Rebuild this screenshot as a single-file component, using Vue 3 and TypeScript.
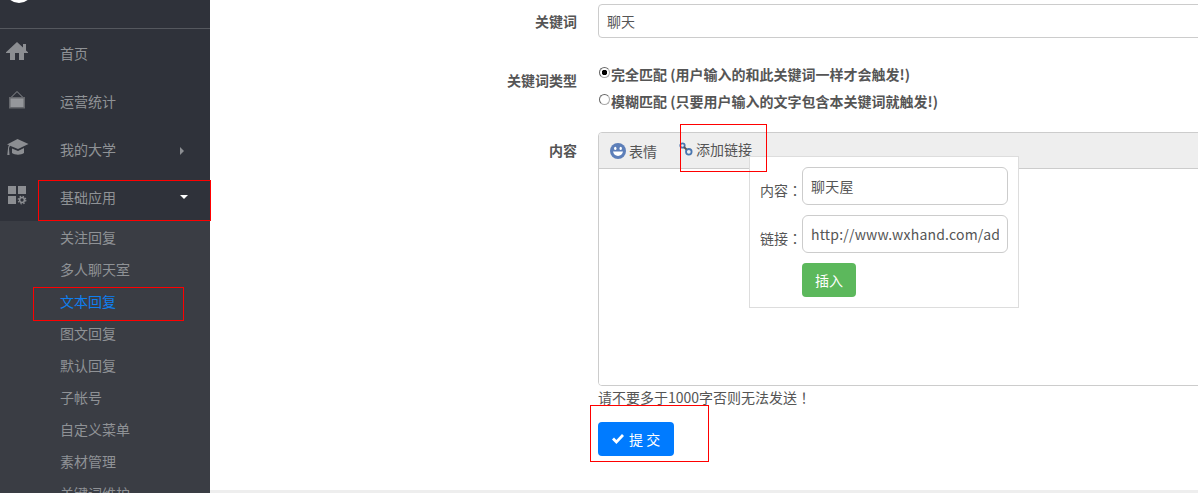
<script setup lang="ts">
const subItems: string[] = ['关注回复', '多人聊天室', '文本回复', '图文回复', '默认回复', '子帐号', '自定义菜单', '素材管理', '关键词维护']
</script>

<template>
  <div class="page">
    <aside class="side">
      <div class="brand"><span class="logo"></span></div>
      <nav class="nav">
        <div class="item">
          <svg class="ico" viewBox="0 0 24 24"><path d="M12 1l6 5.500V3h3v6.500l2 1.700V12h-4v7h-5v-7h-4v7H5v-7H1v-.8z" /></svg>
          <span>首页</span>
        </div>
        <div class="item">
          <svg class="ico" viewBox="0 0 24 24"><path d="M6 8.500 12 2.500l6 6" fill="none" stroke="#8c8e92" stroke-width="1" /><path d="M4 8h16v11.500H4z" fill="#66686d" /><path d="M5.500 9.500h13V18h-13z" fill="#95979b" /></svg>
          <span>运营统计</span>
        </div>
        <div class="item">
          <svg class="ico" viewBox="0 0 24 24"><path d="M12.500 2 23.500 7l-10.500 5-8-3.300c-.6 1-.9 1.800-1 2.800l.5 6.500H2.300l.7-6.500c0-1.300.4-2.300 1-3.400L2 7.500z" /><path d="M7 11.500l6 2.500 6-3v5c-3 2.300-9 2.300-12 0z" /></svg>
          <span>我的大学</span>
          <i class="arrow-right"></i>
        </div>
        <div class="item">
          <svg class="ico" viewBox="0 0 24 24"><path d="M3 1h8v8H3zM13 1h8v8h-8zM3 11h8v8H3z" /><circle cx="17" cy="15" r="2.400" fill="none" stroke="#8c8e92" stroke-width="1.500" /><circle cx="17" cy="15" r="3.800" fill="none" stroke="#8c8e92" stroke-width="1.200" stroke-dasharray="1.500 1.500" /></svg>
          <span>基础应用</span>
          <i class="arrow-down"></i>
        </div>
      </nav>
      <ul class="sub">
        <li v-for="(s, i) in subItems" :key="s" :class="{ active: i === 2 }">{{ s }}</li>
      </ul>
    </aside>

    <main class="main">
      <form class="form" @submit.prevent>
        <div class="row row-kw">
          <label class="lbl">关键词</label>
          <input class="ctl" type="text" value="聊天" />
        </div>
        <div class="row row-type">
          <label class="lbl lbl-type">关键词类型</label>
          <div class="radios">
            <label class="radio"><input type="radio" name="t" checked /><b>完全匹配 (用户输入的和此关键词一样才会触发!)</b></label>
            <label class="radio"><input type="radio" name="t" /><b>模糊匹配 (只要用户输入的文字包含本关键词就触发!)</b></label>
          </div>
        </div>
        <div class="row row-content">
          <label class="lbl lbl-content">内容</label>
          <div class="content">
            <div class="editor">
              <div class="toolbar">
                <span class="tool tool-emoji">
                  <svg width="16" height="16" viewBox="0 0 16 16"><circle cx="8" cy="8" r="8" fill="#5d7fb9" /><ellipse cx="5.300" cy="5.400" rx="1.200" ry="1.700" fill="#fff" /><ellipse cx="10.700" cy="5.400" rx="1.200" ry="1.700" fill="#fff" /><path d="M3 8.500h10c-.4 2.700-2.500 4.400-5 4.400S3.400 11.200 3 8.500z" fill="#fff" /></svg>
                  表情
                </span>
                <span class="tool tool-link">
                  <svg width="14" height="14" viewBox="0 0 14 14" fill="none" stroke="#4a76b0" stroke-width="1.800"><circle cx="3.500" cy="3.500" r="2.200" /><circle cx="9.800" cy="9.800" r="2.800" /><path d="M5 5l2.500 2.500" stroke="#555" /></svg>
                  添加链接
                </span>
              </div>
              <div class="area"></div>
              <div class="popup">
                <div class="p-row"><span class="p-lbl">内容<span class="fw">：</span></span><input class="p-input" type="text" value="聊天屋" /></div>
                <div class="p-row"><span class="p-lbl">链接<span class="fw">：</span></span><input class="p-input" type="text" value="http://www.wxhand.com/addon/Chat" /></div>
                <button class="insert" type="button">插入</button>
              </div>
            </div>
            <p class="hint">请不要多于1000字否则无法发送<span class="fw">！</span></p>
            <button class="submit" type="submit">
              <svg width="14" height="12" viewBox="0 0 14 12"><path d="M1 6.500 3 4.500 5.400 7 11 1l2 2-7.600 8z" fill="#fff" /></svg>
              <span>提 交</span>
            </button>
          </div>
        </div>
      </form>
      <div class="foot"></div>
    </main>

    <div class="mark m1"></div>
    <div class="mark m2"></div>
    <div class="mark m3"></div>
    <div class="mark m4"></div>
  </div>
</template>

<style>
html, body { margin: 0; padding: 0; overflow: hidden; background: #fff; }
</style>

<style scoped>
* { box-sizing: border-box; }
.page {
  position: relative;
  display: flex;
  width: 1198px;
  height: 493px;
  overflow: hidden;
  font-family: "Noto Sans CJK SC", "Liberation Sans", sans-serif;
  font-size: 14px;
  color: #555;
}
.fw { font-family: "Noto Sans CJK TC", sans-serif; }
.side { width: 210px; flex: none; height: 493px; overflow: hidden; background: #2f323a; color: #8f9296; }
.brand { height: 29px; border-bottom: 1px solid #55585e; overflow: hidden; }
.logo { display: block; width: 28px; height: 28px; margin: -25px 0 0 5px; background: #fff; border-radius: 50%; }
.nav { display: flex; flex-direction: column; }
.item { position: relative; display: flex; align-items: center; height: 48px; padding-left: 60px; }
.ico { position: absolute; left: 5px; top: 12px; width: 24px; height: 24px; fill: #8c8e92; }
.arrow-right { position: absolute; left: 180px; top: 22px; border: 4px solid transparent; border-left: 4px solid #8c8e92; border-right: 0; }
.arrow-down { position: absolute; left: 180px; top: 22px; border: 4px solid transparent; border-top: 4px solid #fff; border-bottom: 0; }
.sub { list-style: none; margin: 0; padding: 0 0 0 60px; background: #3a3d44; }
.sub li { display: flex; align-items: center; height: 32px; }
.sub li.active { color: #0f7ff0; }
.main { position: relative; flex: 1; min-width: 0; display: flex; flex-direction: column; overflow: hidden; }
.form { flex: 1; padding: 4px 0 0 277px; }
.row { display: flex; }
.lbl { flex: none; width: 90px; margin-right: 21px; text-align: right; font-weight: 700; }
.row-kw .lbl { line-height: 34px; }
.ctl {
  flex: none;
  width: 640px;
  height: 34px;
  padding: 0 8px;
  border: 1px solid #ccc;
  border-radius: 4px;
  font: inherit;
  color: #555;
  outline: none;
}
.row-type { margin-top: 19px; height: 75px; }
.lbl-type { padding-top: 14px; line-height: 18px; }
.radios { padding-top: 3px; }
.radio { display: flex; align-items: center; height: 27px; white-space: nowrap; }
.radio b { font-weight: 700; }
.radio input {
  appearance: none;
  width: 11px;
  height: 11px;
  margin: 0 1px 3px 1px;
  border: 1px solid #aaa;
  border-top-color: #666;
  border-left-color: #666;
  border-radius: 50%;
  background: #fff;
}
.radio input:checked { background: radial-gradient(circle, #000 2.500px, #fff 3px); }
.lbl-content { padding-top: 9px; line-height: 18px; }
.content { flex: none; width: 640px; }
.editor { position: relative; display: flex; flex-direction: column; height: 254px; border: 1px solid #ccc; border-radius: 4px 0 0 4px; overflow: hidden; }
.toolbar { flex: none; height: 36px; background: #eee; border-bottom: 1px solid #ccc; position: relative; }
.tool { display: flex; align-items: center; gap: 3px; position: absolute; line-height: 20px; }
.tool-emoji { left: 11px; top: 8px; }
.tool-link { left: 80px; top: 6px; }
.area { flex: 1; background: #fff; }
.popup {
  position: absolute;
  left: 150px;
  top: 23px;
  width: 270px;
  height: 152px;
  padding: 10px;
  background: #fff;
  border: 1px solid #ddd;
}
.p-row { display: flex; margin-bottom: 10px; }
.p-lbl { width: 42px; flex: none; padding-top: 13px; line-height: 20px; white-space: nowrap; }
.p-input {
  width: 206px;
  height: 38px;
  padding: 0 8px;
  border: 1px solid #ccc;
  border-radius: 6px;
  font: inherit;
  color: #555;
  letter-spacing: .2px;
  outline: none;
}
.insert {
  display: block;
  width: 54px;
  height: 34px;
  margin-left: 42px;
  padding: 0;
  border: 0;
  border-radius: 4px;
  background: #5cb85c;
  color: #fff;
  font: inherit;
}
.hint { margin: 1px 0 0; height: 20px; line-height: 20px; white-space: nowrap; }
.submit {
  display: flex;
  align-items: center;
  gap: 4px;
  width: 76px;
  height: 34px;
  margin-top: 15px;
  padding: 0 0 0 13px;
  border: 0;
  border-radius: 4px;
  background: #007bff;
  color: #fff;
  font: inherit;
}
.foot { flex: none; height: 3px; background: #eee; }
.mark { position: absolute; border: 1px solid #f00; }
.m1 { left: 38px; top: 180px; width: 173px; height: 41px; }
.m2 { left: 33px; top: 287px; width: 151px; height: 34px; }
.m3 { left: 680px; top: 124px; width: 87px; height: 48px; }
.m4 { left: 590px; top: 405px; width: 119px; height: 57px; }
</style>
